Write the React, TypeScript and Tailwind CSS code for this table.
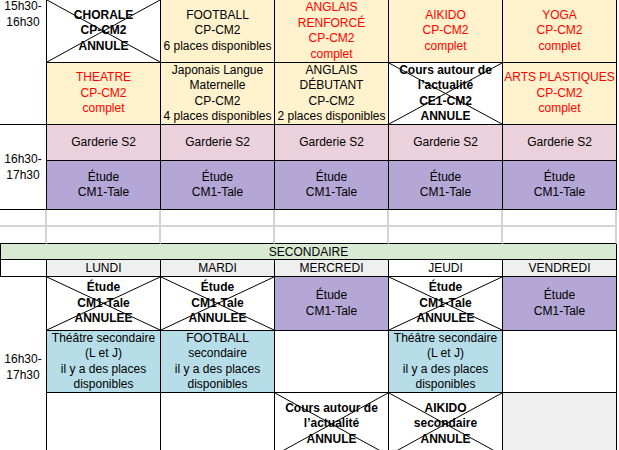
import type { ReactNode } from 'react'

type CellProps = {
  children?: ReactNode
  className?: string
  crossed?: boolean
}

// one spreadsheet cell, text centred; crossed cells get an X drawn over them
function Cell({ children, className = '', crossed = false }: CellProps) {
  return (
    <div
      className={`relative flex flex-col items-center justify-center text-center border-r border-b border-black overflow-hidden ${className}`}
    >
      {children}
      {crossed && (
        <svg className="absolute inset-0 w-full h-full pointer-events-none" viewBox="0 0 100 100" preserveAspectRatio="none">
          <line x1="0" y1="0" x2="100" y2="100" stroke="black" strokeWidth="1" vectorEffect="non-scaling-stroke" />
          <line x1="100" y1="0" x2="0" y2="100" stroke="black" strokeWidth="1" vectorEffect="non-scaling-stroke" />
        </svg>
      )}
    </div>
  )
}

function Lines({ items }: { items: string[] }) {
  return (
    <>
      {items.map((t, i) => (
        <span key={i} className="whitespace-nowrap">
          {t}
        </span>
      ))}
    </>
  )
}

export default function App() {
  return (
    <div className="w-[619px] h-[450px] overflow-hidden bg-white font-['Liberation_Sans',Arial,sans-serif] text-[12px] leading-[15.5px] text-black">
      <div className="grid w-[617px] grid-cols-[47px_repeat(5,114px)] grid-rows-[63px_62px_36px_49px_17px_17px_16px_17px_54px_62px_63px]">
        {/* primaire 15h30 */}
        <div className="row-span-2 flex justify-center border-r border-b border-black">
          <div className="-mt-[2px] text-center leading-[16px]">
            15h30-
            <br />
            16h30
          </div>
        </div>
        <Cell crossed className="bg-white font-bold">
          <Lines items={['CHORALE', 'CP-CM2', 'ANNULE']} />
        </Cell>
        <Cell className="bg-[#fff2cc]">
          <Lines items={['FOOTBALL', 'CP-CM2', '6 places disponibles']} />
        </Cell>
        <Cell className="bg-[#fff2cc] text-[#ff0000]">
          <Lines items={['ANGLAIS', 'RENFORCÉ', 'CP-CM2', 'complet']} />
        </Cell>
        <Cell className="bg-[#fff2cc] text-[#ff0000]">
          <Lines items={['AIKIDO', 'CP-CM2', 'complet']} />
        </Cell>
        <Cell className="bg-[#fff2cc] text-[#ff0000]">
          <Lines items={['YOGA', 'CP-CM2', 'complet']} />
        </Cell>

        <Cell className="bg-[#fff2cc] text-[#ff0000]">
          <Lines items={['THEATRE', 'CP-CM2', 'complet']} />
        </Cell>
        <Cell className="bg-[#fff2cc]">
          <Lines items={['Japonais Langue', 'Maternelle', 'CP-CM2', '4 places disponibles']} />
        </Cell>
        <Cell className="bg-[#fff2cc]">
          <Lines items={['ANGLAIS', 'DÉBUTANT', 'CP-CM2', '2 places disponibles']} />
        </Cell>
        <Cell crossed className="bg-white font-bold">
          <Lines items={['Cours autour de', 'l’actualité', 'CE1-CM2', 'ANNULE']} />
        </Cell>
        <Cell className="bg-[#fff2cc] text-[#ff0000]">
          <Lines items={['ARTS PLASTIQUES', 'CP-CM2', 'complet']} />
        </Cell>

        {/* primaire 16h30 */}
        <div className="row-span-2 flex items-center justify-center border-r border-b border-black">
          <div className="text-center leading-[16px]">
            16h30-
            <br />
            17h30
          </div>
        </div>
        <Cell className="bg-[#ead1dc]">Garderie S2</Cell>
        <Cell className="bg-[#ead1dc]">Garderie S2</Cell>
        <Cell className="bg-[#ead1dc]">Garderie S2</Cell>
        <Cell className="bg-[#ead1dc]">Garderie S2</Cell>
        <Cell className="bg-[#ead1dc]">Garderie S2</Cell>

        <Cell className="bg-[#b4a7d6]">
          <Lines items={['Étude', 'CM1-Tale']} />
        </Cell>
        <Cell className="bg-[#b4a7d6]">
          <Lines items={['Étude', 'CM1-Tale']} />
        </Cell>
        <Cell className="bg-[#b4a7d6]">
          <Lines items={['Étude', 'CM1-Tale']} />
        </Cell>
        <Cell className="bg-[#b4a7d6]">
          <Lines items={['Étude', 'CM1-Tale']} />
        </Cell>
        <Cell className="bg-[#b4a7d6]">
          <Lines items={['Étude', 'CM1-Tale']} />
        </Cell>

        {/* empty rows */}
        <div className="border-r-2 border-b-2 border-[#d4d4d4]" />
        <div className="border-r-2 border-b-2 border-[#d4d4d4]" />
        <div className="border-r-2 border-b-2 border-[#d4d4d4]" />
        <div className="border-r-2 border-b-2 border-[#d4d4d4]" />
        <div className="border-r-2 border-b-2 border-[#d4d4d4]" />
        <div className="border-r-2 border-b-2 border-[#d4d4d4]" />

        <div className="border-r-2 border-r-[#d4d4d4] border-b border-b-black" />
        <div className="border-r-2 border-r-[#d4d4d4] border-b border-b-black" />
        <div className="border-r-2 border-r-[#d4d4d4] border-b border-b-black" />
        <div className="border-r-2 border-r-[#d4d4d4] border-b border-b-black" />
        <div className="border-r-2 border-r-[#d4d4d4] border-b border-b-black" />
        <div className="border-r-2 border-r-[#d4d4d4] border-b border-b-black" />

        {/* secondaire */}
        <div className="col-span-6 flex items-center justify-center bg-[#d9ead3] border-l border-r border-b border-black leading-none">
          SECONDAIRE
        </div>

        <div className="border-l border-r border-b border-black" />
        <Cell className="bg-[#efefef] leading-none">LUNDI</Cell>
        <Cell className="bg-[#efefef] leading-none">MARDI</Cell>
        <Cell className="bg-[#efefef] leading-none">MERCREDI</Cell>
        <Cell className="bg-white leading-none">JEUDI</Cell>
        <Cell className="bg-[#efefef] leading-none">VENDREDI</Cell>

        <div className="row-span-3 flex items-center justify-center border-r border-black">
          <div className="text-center leading-[16px]">
            16h30-
            <br />
            17h30
          </div>
        </div>
        <Cell crossed className="bg-white font-bold">
          <Lines items={['Étude', 'CM1-Tale', 'ANNULEE']} />
        </Cell>
        <Cell crossed className="bg-white font-bold">
          <Lines items={['Étude', 'CM1-Tale', 'ANNULEE']} />
        </Cell>
        <Cell className="bg-[#b4a7d6]">
          <Lines items={['Étude', 'CM1-Tale']} />
        </Cell>
        <Cell crossed className="bg-white font-bold">
          <Lines items={['Étude', 'CM1-Tale', 'ANNULEE']} />
        </Cell>
        <Cell className="bg-[#b4a7d6]">
          <Lines items={['Étude', 'CM1-Tale']} />
        </Cell>

        <Cell className="bg-[#b7dee8]">
          <Lines items={['Théâtre secondaire', '(L et J)', 'il y a des places', 'disponibles']} />
        </Cell>
        <Cell className="bg-[#b7dee8]">
          <Lines items={['FOOTBALL', 'secondaire', 'il y a des places', 'disponibles']} />
        </Cell>
        <Cell className="bg-white" />
        <Cell className="bg-[#b7dee8]">
          <Lines items={['Théâtre secondaire', '(L et J)', 'il y a des places', 'disponibles']} />
        </Cell>
        <Cell className="bg-white" />

        <Cell className="bg-white" />
        <Cell className="bg-white" />
        <Cell crossed className="bg-white font-bold">
          <Lines items={['Cours autour de', 'l’actualité', 'ANNULE']} />
        </Cell>
        <Cell crossed className="bg-white font-bold">
          <Lines items={['AIKIDO', 'secondaire', 'ANNULE']} />
        </Cell>
        <Cell className="bg-[#efefef]" />
      </div>
    </div>
  )
}
